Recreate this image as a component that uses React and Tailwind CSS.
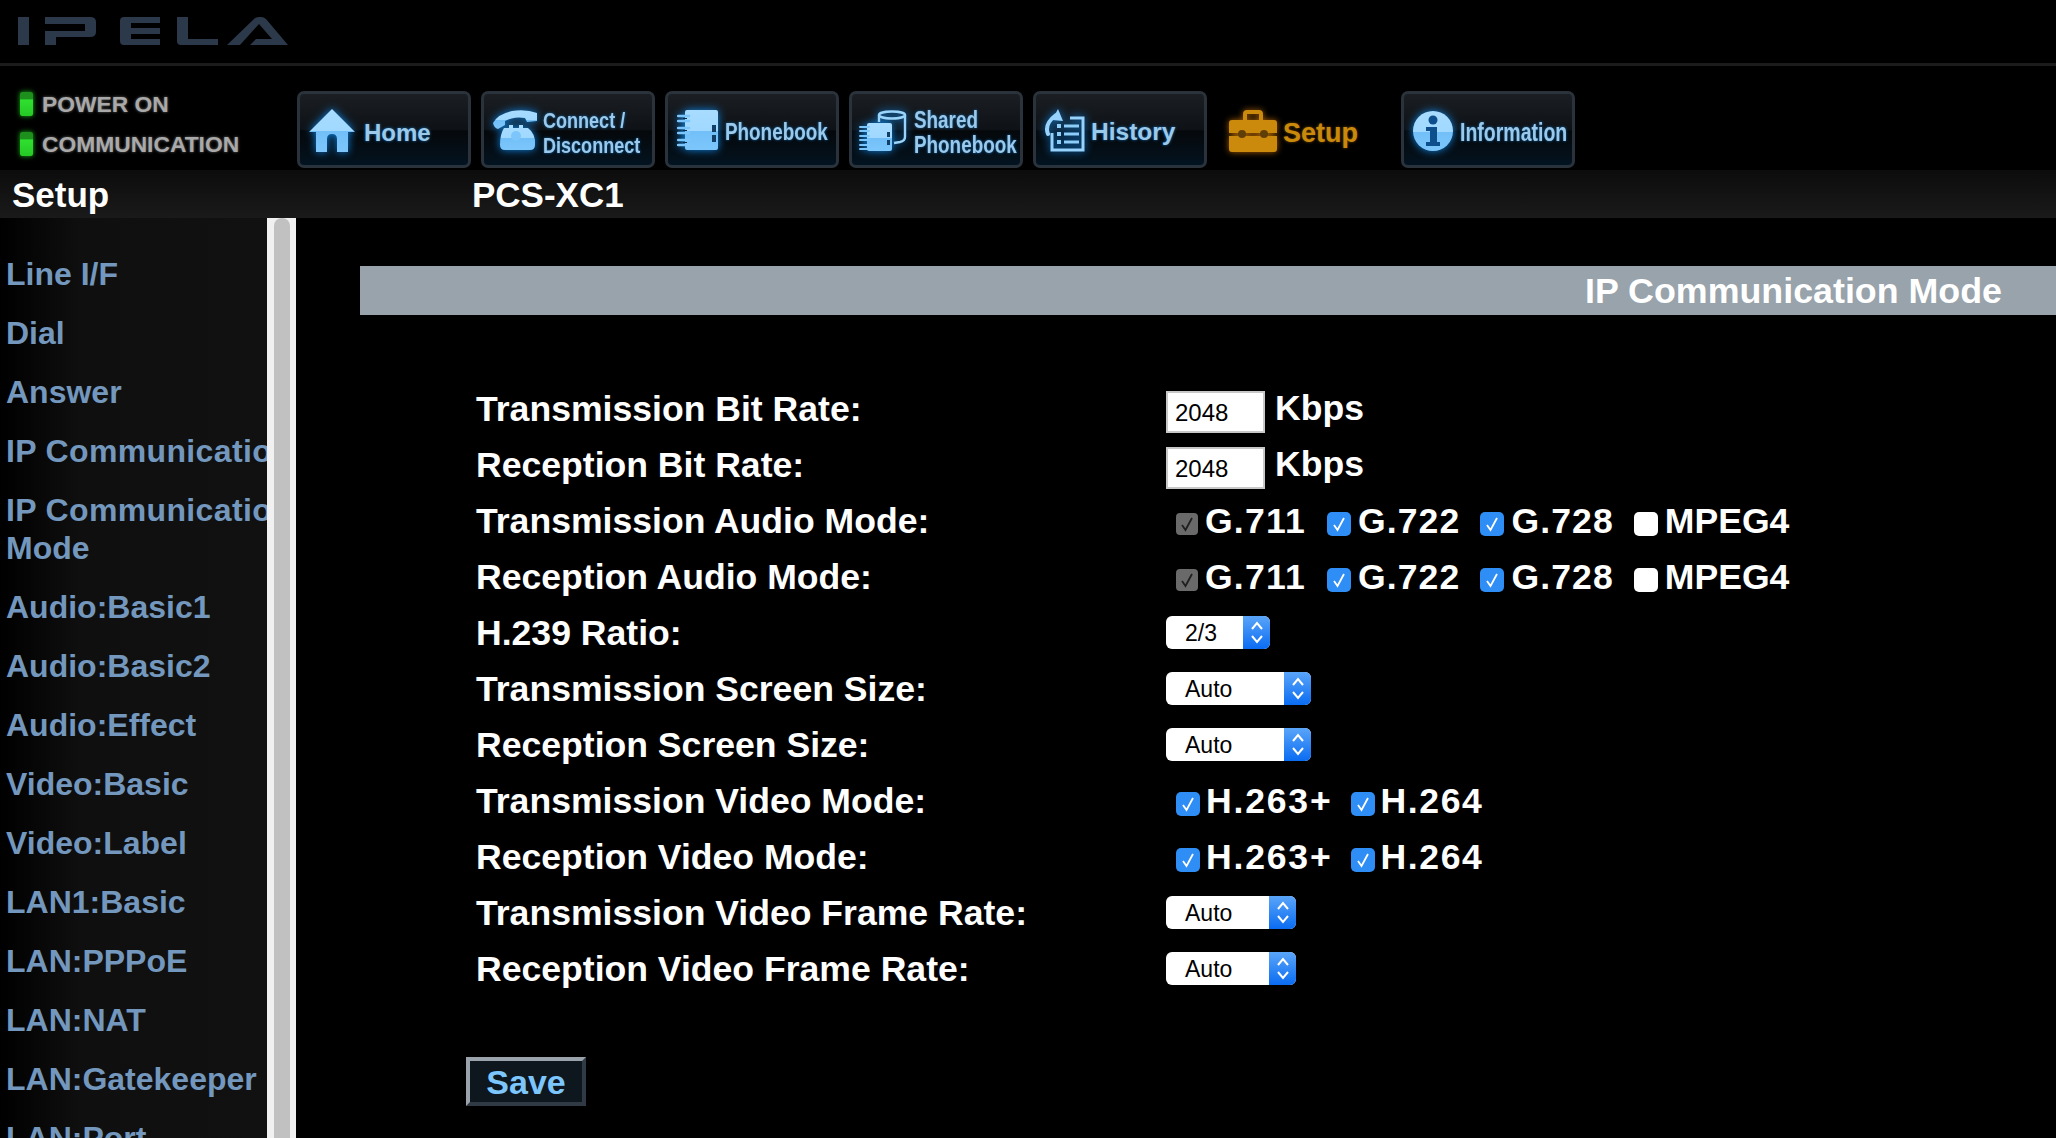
import React from "react";

function Logo() {
  return (
    <svg width="272" height="30" viewBox="0 0 272 30" className="block">
      <g fill="#2c394b">
        <rect x="0" y="0" width="11" height="28" />
        <path d="M27 0H72Q78 0 78 5V15Q78 20 72 20H38V28H27V14H67V7H27Z" />
        <path d="M106 0H142V6H113V11H142V17H113V22H142V28H106Q102 28 102 24V4Q102 0 106 0Z" />
        <path d="M159 0H170V22H200V28H163Q159 28 159 24Z" />
        <path d="M209 28L236 2Q238 0 241 0H243Q246 0 248 2L270 28H232L238 22H254L241 7L222 28Z" />
      </g>
    </svg>
  );
}

function Grad({ id }) {
  return (
    <defs>
      <linearGradient id={id} x1="0" y1="0" x2="0" y2="1">
        <stop offset="0" stopColor="#a8dcff" />
        <stop offset="0.52" stopColor="#a0d8ff" />
        <stop offset="0.52" stopColor="#72bff8" />
        <stop offset="1" stopColor="#7cc6fb" />
      </linearGradient>
    </defs>
  );
}

const glow = "block shrink-0 drop-shadow-[0_0_4px_#0f86e6]";

function HomeIcon() {
  return (
    <svg width="48" height="44" viewBox="0 0 48 44" className={glow}>
      <Grad id="g-home" />
      <path
        fill="url(#g-home)"
        fillRule="evenodd"
        d="M24 0L47 23H40V43H29V30Q29 25 24 25T19 30V43H8V23H1Z"
      />
    </svg>
  );
}

function PhoneIcon() {
  return (
    <svg width="46" height="42" viewBox="0 0 46 42" className={glow}>
      <Grad id="g-phone" />
      <path
        fill="url(#g-phone)"
        d="M1 13Q6 4 20 1Q34 -1 45 3V11L35 12L33 8Q22 6 13 11V15L6 19Q2 18 1 13Z"
      />
      <path
        fill="url(#g-phone)"
        d="M12 18H17V15H21V18H27V15H31V18H36Q44 24 43 35Q43 40 38 40H13Q8 40 8 35Q8 24 12 18Z"
      />
      <circle cx="24" cy="26" r="5" fill="#7cc6fb" />
    </svg>
  );
}

function BookIcon() {
  return (
    <svg width="41" height="41" viewBox="0 0 41 41" className={glow}>
      <Grad id="g-book" />
      <rect x="8" y="0" width="33" height="40" rx="2" fill="url(#g-book)" />
      <rect x="35" y="15" width="4" height="7" fill="#123f66" />
      <rect x="35" y="25" width="4" height="7" fill="#123f66" />
      <g stroke="#7cc6fb" strokeWidth="2.5" fill="none" strokeLinecap="round">
        <path d="M1 6H12M1 11H12M1 18H12M1 23H12M1 30H12M1 35H12" />
      </g>
      <g stroke="#0a2a44" strokeWidth="1.2">
        <path d="M6 8.5H10M6 20.5H10M6 32.5H10" />
      </g>
    </svg>
  );
}

function SharedIcon() {
  return (
    <svg width="49" height="42" viewBox="0 0 49 42" className={glow}>
      <Grad id="g-share" />
      <g fill="none" stroke="#9ad4fb" strokeWidth="2.4">
        <ellipse cx="33" cy="5" rx="13" ry="3.5" />
        <path d="M20 5V12M46 5V27Q46 31 41 32L35 33" />
      </g>
      <rect x="8" y="13" width="25" height="28" rx="2" fill="url(#g-share)" />
      <rect x="28" y="22" width="3" height="5" fill="#123f66" />
      <rect x="28" y="30" width="3" height="5" fill="#123f66" />
      <path
        d="M1 17H10M1 21H10M1 26H10M1 30H10M1 35H10M1 39H10"
        stroke="#7cc6fb"
        strokeWidth="2"
        strokeLinecap="round"
      />
    </svg>
  );
}

function HistoryIcon() {
  return (
    <svg width="42" height="44" viewBox="0 0 42 44" className={glow}>
      <g fill="none" stroke="#96d2fb" strokeWidth="3">
        <path d="M9 24V41H40V9H27" />
        <path d="M5 25Q1 15 13 6" strokeWidth="4" strokeLinecap="round" />
      </g>
      <path d="M15 0L20 12L9 11Z" fill="#96d2fb" />
      <g fill="#8ccdfa">
        <rect x="14" y="15" width="4" height="4" />
        <rect x="21" y="15.5" width="15" height="3" />
        <rect x="14" y="23" width="4" height="4" />
        <rect x="21" y="23.5" width="15" height="3" />
        <rect x="14" y="31" width="4" height="4" />
        <rect x="21" y="31.5" width="15" height="3" />
      </g>
    </svg>
  );
}

function ToolboxIcon() {
  return (
    <svg
      width="48"
      height="42"
      viewBox="0 0 48 42"
      className="block shrink-0 drop-shadow-[0_0_3px_#a85f00]"
    >
      <path
        fill="none"
        stroke="#cc8a0c"
        strokeWidth="4"
        d="M16 11V4Q16 2 18 2H30Q32 2 32 4V11"
      />
      <path
        fill="#cc8a0c"
        d="M3 10H45Q48 10 48 13V23H0V13Q0 10 3 10ZM0 26H48V39Q48 42 45 42H3Q0 42 0 39Z"
      />
      <circle cx="13" cy="24" r="4" fill="#5f3e08" />
      <circle cx="35" cy="24" r="4" fill="#5f3e08" />
    </svg>
  );
}

function InfoIcon() {
  return (
    <svg width="40" height="40" viewBox="0 0 40 40" className={glow}>
      <Grad id="g-info" />
      <circle cx="20" cy="20" r="20" fill="url(#g-info)" />
      <circle cx="20" cy="9" r="4.5" fill="#0c4f8c" />
      <path d="M13 16H24V31H27V35H13V31H17V20H13Z" fill="#0c4f8c" />
    </svg>
  );
}

const navCls =
  "relative flex h-[77px] w-[174px] shrink-0 items-center rounded-[7px] border-[3px] border-[#2a323c] bg-[linear-gradient(180deg,#1b1f24_0%,#0e1216_50%,#05080b_52%,#04101a_88%,#021422_100%)] pt-[2px]";
const labelCls =
  "mt-[4px] font-bold text-[#9cc9ea] [text-shadow:0_0_3px_#0f6db8] whitespace-nowrap";
const narrow = "origin-left scale-x-[0.82]";

function Nav() {
  return (
    <div className="flex gap-[10px]">
      <div className={`${navCls} pl-[8px]`}>
        <HomeIcon />
        <span className={`${labelCls} ml-[8px] text-[24px] leading-none`}>Home</span>
      </div>
      <div className={`${navCls} pl-[8px]`}>
        <PhoneIcon />
        <span className={`${labelCls} ${narrow} ml-[5px] text-[22px] leading-[25px]`}>
          Connect /<br />
          Disconnect
        </span>
      </div>
      <div className={`${navCls} pl-[9px]`}>
        <BookIcon />
        <span className={`${labelCls} ${narrow} ml-[7px] text-[23px] leading-none`}>Phonebook</span>
      </div>
      <div className={`${navCls} pl-[7px]`}>
        <SharedIcon />
        <span className={`${labelCls} ${narrow} ml-[6px] text-[23px] leading-[25px]`}>
          Shared
          <br />
          Phonebook
        </span>
      </div>
      <div className={`${navCls} pl-[7px]`}>
        <HistoryIcon />
        <span className={`${labelCls} ml-[6px] text-[24.5px] leading-none`}>History</span>
      </div>
      <div className="flex h-[77px] w-[174px] shrink-0 items-center pl-[12px] pt-[2px]">
        <ToolboxIcon />
        <span className="ml-[6px] mt-[6px] whitespace-nowrap text-[27px] font-bold leading-none text-[#c98a0c] [text-shadow:0_0_3px_#7a4a00]">
          Setup
        </span>
      </div>
      <div className={`${navCls} pl-[9px]`}>
        <InfoIcon />
        <span className={`${labelCls} origin-left scale-x-[0.78] ml-[7px] text-[25px] leading-none`}>
          Information
        </span>
      </div>
    </div>
  );
}

function Led({ label }) {
  return (
    <div className="flex h-[40px] items-center">
      <span className="h-[24px] w-[13px] rounded-[2px] bg-[linear-gradient(180deg,#1c8f1c_0%,#1c8f1c_30%,#2fe02f_32%,#25c925_100%)] shadow-[0_0_5px_#1fae1f]" />
      <span className="ml-[9px] whitespace-nowrap text-[22.8px] font-bold leading-none text-[#a9a9a9] [text-shadow:0_0_3px_#666666]">
        {label}
      </span>
    </div>
  );
}

function Check({ kind }) {
  if (kind === "off")
    return <span className="mt-[4px] block h-[24px] w-[24px] shrink-0 rounded-[5px] bg-white" />;
  const disabled = kind === "disabled";
  return (
    <span
      className={
        disabled
          ? "mt-[4px] flex h-[22px] w-[22px] shrink-0 items-center justify-center rounded-[4px] bg-[#6a6a6a]"
          : "mt-[4px] flex h-[24px] w-[24px] shrink-0 items-center justify-center rounded-[5px] bg-[#2f8df6]"
      }
    >
      <svg width="14" height="16" viewBox="0 0 14 16" className="block">
        <path
          d="M2 9L5.5 14L12 2"
          fill="none"
          stroke={disabled ? "#1f1f1f" : "#ffffff"}
          strokeWidth="1.8"
        />
      </svg>
    </span>
  );
}

function Opt({ kind, label, gap, end, track }) {
  return (
    <div className="flex items-center" style={{ marginRight: end }}>
      <Check kind={kind} />
      <span className="leading-none" style={{ marginLeft: gap, letterSpacing: track }}>
        {label}
      </span>
    </div>
  );
}

function Audio() {
  return (
    <div className="flex items-center pl-[10px]">
      <Opt kind="disabled" label="G.711" gap={7} end={21} track={1.2} />
      <Opt kind="on" label="G.722" gap={7} end={20} track={1.1} />
      <Opt kind="on" label="G.728" gap={7} end={20} track={1.1} />
      <Opt kind="off" label="MPEG4" gap={7} />
    </div>
  );
}

function Video() {
  return (
    <div className="flex items-center pl-[10px]">
      <Opt kind="on" label="H.263+" gap={6} end={18} track={1.8} />
      <Opt kind="on" label="H.264" gap={6} track={1.6} />
    </div>
  );
}

function Select({ value, w }) {
  return (
    <div className={`-mt-[3px] flex h-[33px] ${w} items-stretch overflow-hidden rounded-[6px] bg-white text-black`}>
      <span className="flex-1 pl-[19px] text-[23px] font-normal leading-[35px]">{value}</span>
      <span className="flex w-[27px] flex-col items-center justify-center bg-[linear-gradient(180deg,#5aa5f9_0%,#0a6cf2_100%)]">
        <svg width="14" height="25" viewBox="0 0 14 25" className="block">
          <path
            d="M2 9L7 3L12 9M2 16L7 22L12 16"
            fill="none"
            stroke="#ffffff"
            strokeWidth="2"
          />
        </svg>
      </span>
    </div>
  );
}

function Rate() {
  return (
    <div className="flex items-center">
      <input
        readOnly
        value="2048"
        className="mt-[3px] h-[42px] w-[99px] border-2 border-[#c8c8c8] bg-white pl-[7px] pt-[3px] text-[24px] font-normal text-black outline-none"
      />
      <span className="-mt-[2px] ml-[10px] leading-none">Kbps</span>
    </div>
  );
}

const rows = [
  ["Transmission Bit Rate:", <Rate />],
  ["Reception Bit Rate:", <Rate />],
  ["Transmission Audio Mode:", <Audio />],
  ["Reception Audio Mode:", <Audio />],
  ["H.239 Ratio:", <Select value="2/3" w="w-[104px]" />],
  ["Transmission Screen Size:", <Select value="Auto" w="w-[145px]" />],
  ["Reception Screen Size:", <Select value="Auto" w="w-[145px]" />],
  ["Transmission Video Mode:", <Video />],
  ["Reception Video Mode:", <Video />],
  ["Transmission Video Frame Rate:", <Select value="Auto" w="w-[130px]" />],
  ["Reception Video Frame Rate:", <Select value="Auto" w="w-[130px]" />],
];

const menu = [
  "Line I/F",
  "Dial",
  "Answer",
  "IP Communication",
  "IP Communication|Mode",
  "Audio:Basic1",
  "Audio:Basic2",
  "Audio:Effect",
  "Video:Basic",
  "Video:Label",
  "LAN1:Basic",
  "LAN:PPPoE",
  "LAN:NAT",
  "LAN:Gatekeeper",
  "LAN:Port",
];

function MenuItem({ text }) {
  const [a, b] = text.split("|");
  return (
    <li className="mb-[21px] whitespace-nowrap">
      <span style={{ letterSpacing: a === "IP Communication" ? 0.35 : undefined }}>{a}</span>
      {b && (
        <>
          <br />
          {b}
        </>
      )}
    </li>
  );
}

export default function App() {
  return (
    <div className="flex h-[1138px] w-full flex-col overflow-hidden bg-black text-white [font-family:'Liberation_Sans',Arial,sans-serif]">
      <header className="h-[66px] shrink-0 border-b-[3px] border-[#1c1c1c] pl-[18px] pt-[17px]">
        <Logo />
      </header>

      <div className="flex h-[104px] shrink-0">
        <div className="w-[297px] shrink-0 pl-[20px] pt-[18px]">
          <Led label="POWER ON" />
          <Led label="COMMUNICATION" />
        </div>
        <div className="pt-[25px]">
          <Nav />
        </div>
      </div>

      <div className="flex h-[48px] shrink-0 items-center bg-[linear-gradient(180deg,#0c0c0c_0%,#1a1a1a_100%)] text-[35px] font-bold leading-none">
        <span className="w-[472px] pl-[12px]">Setup</span>
        <span>PCS-XC1</span>
      </div>

      <div className="flex min-h-0 flex-1">
        <nav className="flex w-[296px] shrink-0">
          <ul className="w-[267px] shrink-0 overflow-hidden bg-[linear-gradient(90deg,#000000_0%,#0f0f0f_30%,#111111_100%)] pl-[6px] pt-[37px] text-[32px] font-bold leading-[38px] text-[#7397bd]">
            {menu.map((m) => (
              <MenuItem key={m} text={m} />
            ))}
          </ul>
          <div className="w-[29px] shrink-0 bg-[#f1f1f1] px-[7px]">
            <div className="h-full w-[16px] rounded-t-[8px] bg-[#c1c1c1]" />
          </div>
        </nav>

        <main className="min-w-0 flex-1 pl-[64px] pt-[48px]">
          <div className="h-[49px] bg-[#99a3ab] pr-[54px] text-right text-[35.8px] font-bold leading-[51px]">
            IP Communication Mode
          </div>

          <form className="pl-[116px] pt-[67px] text-[35.6px] font-bold">
            {rows.map(([label, ctrl], i) => (
              <div key={i} className="flex h-[56px] items-center">
                <span className="w-[690px] shrink-0 whitespace-nowrap leading-none">{label}</span>
                {ctrl}
              </div>
            ))}
          </form>

          <button
            type="button"
            className="ml-[106px] mt-[59px] h-[49px] w-[120px] border-4 border-b-[#2f3a45] border-l-[#9aa3ab] border-r-[#2f3a45] border-t-[#9aa3ab] bg-[#0e161e] text-[34px] font-bold leading-none text-[#7cc6fb]"
          >
            Save
          </button>
        </main>
      </div>
    </div>
  );
}
